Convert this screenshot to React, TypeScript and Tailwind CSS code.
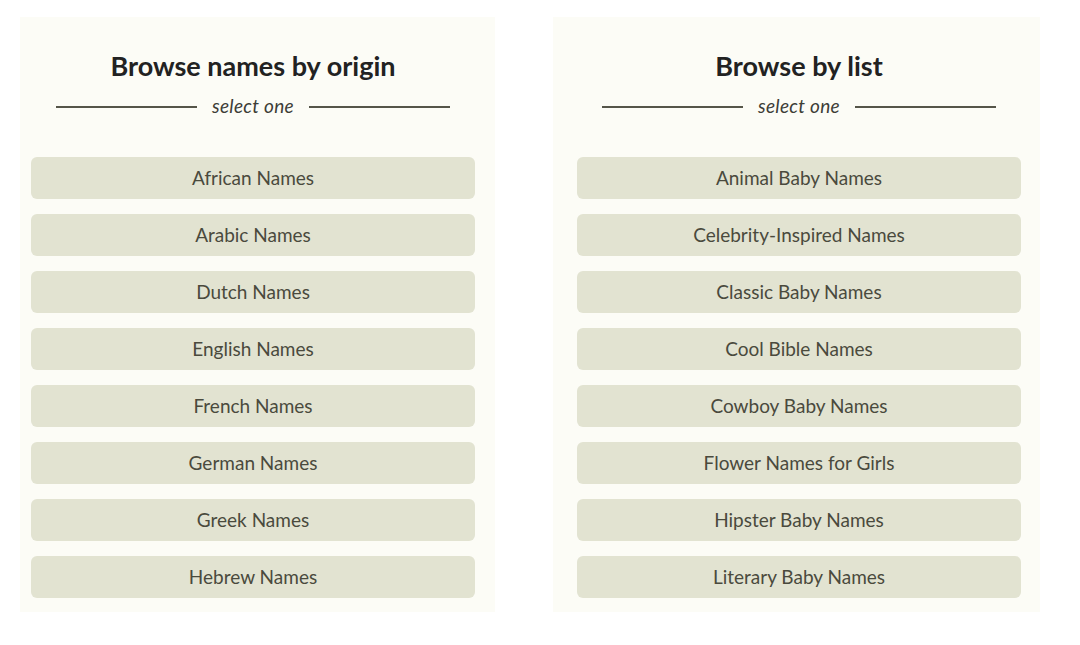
import React from 'react';

const origins = [
  'African Names',
  'Arabic Names',
  'Dutch Names',
  'English Names',
  'French Names',
  'German Names',
  'Greek Names',
  'Hebrew Names',
];

const lists = [
  'Animal Baby Names',
  'Celebrity-Inspired Names',
  'Classic Baby Names',
  'Cool Bible Names',
  'Cowboy Baby Names',
  'Flower Names for Girls',
  'Hipster Baby Names',
  'Literary Baby Names',
];

interface PanelProps {
  title: string;
  items: string[];
  className: string;
}

const Panel: React.FC<PanelProps> = ({ title, items, className }) => (
  <section className={`flex flex-col bg-[#fcfcf6] ${className}`}>
    <h2 className="pt-[33px] text-center text-[27px] font-bold leading-8 text-[#222222]">{title}</h2>
    <div className="mt-[12px] flex items-center justify-center gap-[15px] px-[25px]">
      <span className="mt-[2px] h-[1.5px] flex-1 bg-[#555549]" />
      <span className="text-[19px] italic leading-6 tracking-[0.3px] text-[#3d3d36]">select one</span>
      <span className="mt-[2px] h-[1.5px] flex-1 bg-[#555549]" />
    </div>
    <ul className="mt-[39px] flex flex-col gap-[15px]">
      {items.map((item) => (
        <li key={item}>
          <button className="flex h-[42px] w-full items-center justify-center rounded-md bg-[#e2e3d1] text-[19px] text-[#4a4a3d]">
            {item}
          </button>
        </li>
      ))}
    </ul>
  </section>
);

export default function App() {
  return (
    <div className="h-[645px] w-[1080px] overflow-hidden bg-white font-['Lato',sans-serif]">
      <div className="flex gap-[58px] pl-[20px] pt-[17px]">
        <Panel title="Browse names by origin" items={origins} className="h-[595px] w-[475px] pl-[11px] pr-[20px]" />
        <Panel title="Browse by list" items={lists} className="h-[595px] w-[487px] pl-[24px] pr-[19px]" />
      </div>
    </div>
  );
}
